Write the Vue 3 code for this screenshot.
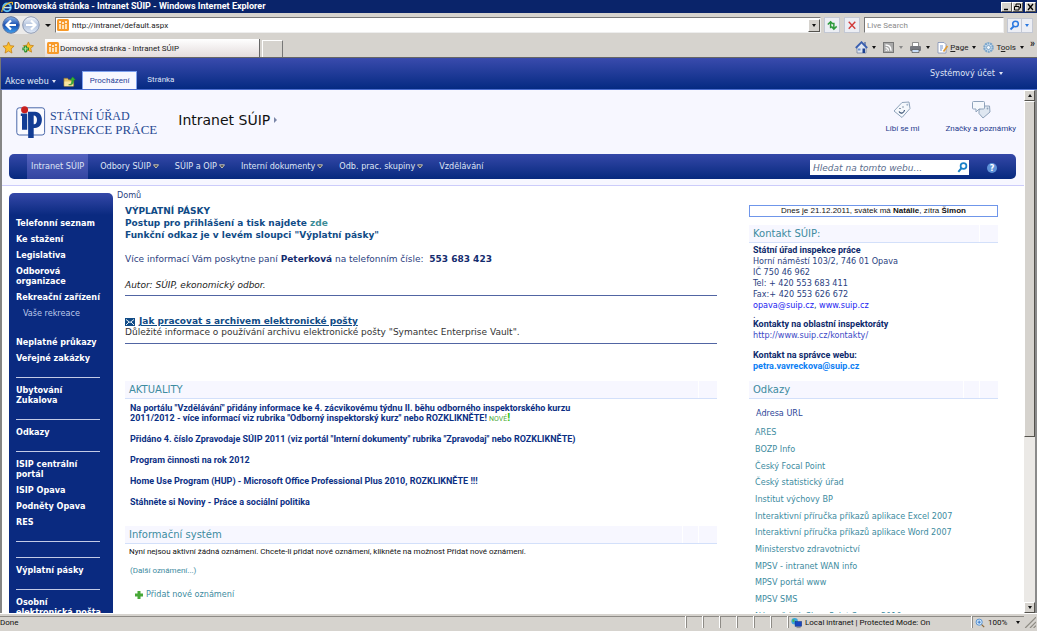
<script setup>
import { ref } from 'vue'

const address = ref('http://intranet/default.aspx')
const liveSearch = ref('')
const siteSearch = ref('')

const topNav = [
  { label: 'Intranet SÚIP', active: true },
  { label: 'Odbory SÚIP', menu: true },
  { label: 'SÚIP a OIP', menu: true },
  { label: 'Interní dokumenty', menu: true },
  { label: 'Odb. prac. skupiny', menu: true },
  { label: 'Vzdělávání' },
]

const sideNav = [
  { label: 'Telefonní seznam' },
  { label: 'Ke stažení' },
  { label: 'Legislativa' },
  { label: 'Odborová organizace' },
  { label: 'Rekreační zařízení' },
  { label: 'Vaše rekreace', kind: 'sub' },
  { label: 'Neplatné průkazy' },
  { label: 'Veřejné zakázky' },
  { kind: 'line' },
  { label: 'Ubytování Zukalova' },
  { kind: 'line' },
  { label: 'Odkazy' },
  { kind: 'line' },
  { label: 'ISIP centrální portál' },
  { label: 'ISIP Opava' },
  { label: 'Podněty Opava' },
  { label: 'RES' },
  { kind: 'line' },
  { kind: 'line' },
  { label: 'Výplatní pásky' },
  { kind: 'line' },
  { label: 'Osobní elektronická pošta' },
]

const links = [
  'ARES',
  'BOZP Info',
  'Český Focal Point',
  'Český statistický úřad',
  'Institut výchovy BP',
  'Interaktivní příručka příkazů aplikace Excel 2007',
  'Interaktivní příručka příkazů aplikace Word 2007',
  'Ministerstvo zdravotnictví',
  'MPSV - intranet WAN info',
  'MPSV portál www',
  'MPSV SMS',
  'Nápověda k SharePoint Server 2010',
]
</script>

<template>
  <div class="window">
    <header class="titlebar">
      <svg class="ie" viewBox="0 0 12 12">
        <circle cx="6" cy="6.4" r="3.8" fill="none" stroke="#5cc0f5" stroke-width="2" />
        <path d="M3 6.6h7" stroke="#bfe8ff" stroke-width="1.5" />
        <path d="M1 11C0 8 6 1 11 1.2c1 .3.400 1.800 0 2.600" fill="none" stroke="#f2c230" stroke-width="1.100" />
      </svg>
      <h1>Domovská stránka - Intranet SÚIP - Windows Internet Explorer</h1>
      <div class="winbtns">
        <button aria-label="Minimize"><svg viewBox="0 0 9 8"><path d="M2 6.500h4" stroke="#000" stroke-width="1.500" /></svg></button>
        <button aria-label="Restore"><svg viewBox="0 0 9 8"><path d="M3 3V1h4.500v4H6M1.500 3.500H6v3.500H1.500z" fill="none" stroke="#000" /></svg></button>
        <button class="close" aria-label="Close"><svg viewBox="0 0 9 8"><path d="M2 1l5 6M7 1L2 7" stroke="#000" stroke-width="1.300" /></svg></button>
      </div>
    </header>

    <div class="addressrow">
      <div class="travel">
        <button aria-label="Back">
          <svg viewBox="0 0 18 18">
            <defs><linearGradient id="bk" x2="0" y2="1"><stop offset="0" stop-color="#8ab4ea" /><stop offset=".5" stop-color="#1a4fb0" /><stop offset="1" stop-color="#3fa0ee" /></linearGradient></defs>
            <circle cx="9" cy="9" r="8.300" fill="url(#bk)" stroke="#5a6f9a" />
            <path d="M14 9H5M9 4.500L4.500 9 9 13.500" fill="none" stroke="#fff" stroke-width="2.200" />
          </svg>
        </button>
        <button aria-label="Forward">
          <svg viewBox="0 0 18 18">
            <defs><linearGradient id="fw" x2="0" y2="1"><stop offset="0" stop-color="#f4f7fc" /><stop offset=".5" stop-color="#b4c4de" /><stop offset="1" stop-color="#dfe9f7" /></linearGradient></defs>
            <circle cx="9" cy="9" r="8.300" fill="url(#fw)" stroke="#8d99b0" />
            <path d="M4 9h9M9 4.500L13.500 9 9 13.500" fill="none" stroke="#fff" stroke-width="2.200" />
          </svg>
        </button>
      </div>
      <button class="caret" aria-label="Recent pages"></button>
      <div class="address">
        <svg class="fav" viewBox="0 0 12 12"><rect width="12" height="12" rx="1.500" fill="#f79a2a" /><path d="M3 5v5M6 6v4M9 5v5" stroke="#fff3d8" stroke-width="1.600" /><circle cx="3" cy="3" r="1" fill="#fff" /><circle cx="6" cy="4" r="1" fill="#fff" /><circle cx="9" cy="3" r="1" fill="#fff" /></svg>
        <input v-model="address" aria-label="Address" />
        <button class="drop" aria-label="Show addresses"><i class="tri"></i></button>
      </div>
      <button class="tool" aria-label="Refresh"><svg viewBox="0 0 15 15"><path d="M6 11V4.500M3 7l3-3 2.500 2.500M9.500 5v6.500M7 9l2.500 3L12.500 9" fill="none" stroke="#2c9a3c" stroke-width="1.600" /></svg></button>
      <button class="tool" aria-label="Stop"><svg viewBox="0 0 15 15"><path d="M4 4l7 7.500M11 4l-7 7.500" stroke="#d23c3c" stroke-width="1.500" /></svg></button>
      <input v-model="liveSearch" class="live" placeholder="Live Search" aria-label="Live Search" />
      <div class="searchbtns">
        <button aria-label="Search"><svg viewBox="0 0 13 13"><circle cx="7.500" cy="5" r="2.800" fill="none" stroke="#2a78e0" stroke-width="1.500" /><path d="M5.500 7.500L2.500 10.500" stroke="#2a78e0" stroke-width="1.800" /></svg></button>
        <button class="more" aria-label="Search options"><i class="tri blue"></i></button>
      </div>
    </div>

    <div class="tabrow">
      <button class="plain" aria-label="Favorites"><svg viewBox="0 0 14 14"><path d="M7 1l1.800 4 4.200.500-3.200 3 .900 4.500L7 10.800 3.300 13l.900-4.500L1 5.500 5.200 5z" fill="#fbc02d" stroke="#c47c10" stroke-width=".8" /></svg></button>
      <button class="plain" aria-label="Add to favorites"><svg viewBox="0 0 14 14"><path d="M8 1l1.500 3.500 4 .500-3 3 .900 4L8 10.200 4.500 12l.900-4-3-3 4-.500z" fill="#fbc02d" stroke="#c47c10" stroke-width=".8" /><path d="M5 5v7M1.500 8.500h7" stroke="#1d8a2a" stroke-width="3" /><path d="M5 6v5M2.500 8.500h5" stroke="#b9f0a8" /></svg></button>
      <button class="tab">
        <svg class="fav" viewBox="0 0 12 12"><rect width="12" height="12" rx="1.500" fill="#f79a2a" /><path d="M3 5v5M6 6v4M9 5v5" stroke="#fff3d8" stroke-width="1.600" /><circle cx="3" cy="3" r="1" fill="#fff" /><circle cx="6" cy="4" r="1" fill="#fff" /><circle cx="9" cy="3" r="1" fill="#fff" /></svg>
        Domovská stránka - Intranet SÚIP
      </button>
      <button class="newtab" aria-label="New tab"></button>
      <div class="commands">
        <button aria-label="Home"><svg viewBox="0 0 13 13"><path d="M2 6v6h9V6L6.500 2z" fill="#dfe5f0" stroke="#6a7a9a" stroke-width=".7" /><path d="M9 1h2v4H9z" fill="#7d8db0" /><path d="M.800 7L6.500 1.200 12.200 7" fill="none" stroke="#3a5fb0" stroke-width="1.800" /><path d="M7.500 7.500h2.500v4.500H7.500z" fill="#1b3f90" /><path d="M3 7.500h2.500v2H3z" fill="#6d94d4" /></svg><i class="tri"></i></button>
        <button aria-label="Feeds"><svg viewBox="0 0 13 13"><rect x="1.500" y="1.500" width="10" height="10" fill="#a9a9a9" stroke="#777" /><path d="M3.500 4c3.300 0 5.500 2.300 5.500 5.700M3.500 6.600c1.800 0 2.900 1.200 2.900 3.100" fill="none" stroke="#fff" stroke-width="1.300" /><circle cx="4.200" cy="9.200" r=".8" fill="#fff" /></svg><i class="tri dim"></i></button>
        <button aria-label="Print"><svg viewBox="0 0 13 13"><path d="M3.500 1.500h6v4h-6z" fill="#fff" stroke="#777" stroke-width=".8" /><rect x="1" y="5" width="11" height="5" rx="1" fill="#77797f" /><path d="M3 8.500h7v3H3z" fill="#c9def8" stroke="#555" stroke-width=".7" /></svg><i class="tri"></i></button>
        <button><svg viewBox="0 0 13 13"><path d="M2 1.500h6l2 2v8.500H2z" fill="#fff" stroke="#7d8fb5" stroke-width=".8" /><path d="M4 5h3M4 7h3M4 9h2" stroke="#4d78c4" stroke-width=".8" /><path d="M11.500 5L7.500 10.500" stroke="#e09a30" stroke-width="1.700" /></svg><span><u>P</u>age</span><i class="tri"></i></button>
        <button><svg viewBox="0 0 13 13"><circle cx="6.500" cy="6.500" r="4.200" fill="#d7e8f6" stroke="#7ba6cc" stroke-width="2.200" stroke-dasharray="2 .600" /><circle cx="6.500" cy="6.500" r="2" fill="#f2f7fb" stroke="#6690b8" stroke-width=".8" /></svg><span>T<u>o</u>ols</span><i class="tri"></i></button>
        <button class="chev" aria-label="More commands">»</button>
      </div>
    </div>

    <div class="ribbon">
      <button class="actions">Akce webu <i class="tri light"></i></button>
      <button class="plain" aria-label="Navigate up"><svg viewBox="0 0 14 14"><path d="M1 3.500h4l1 1.500h5.500v7H1z" fill="#e5c469" stroke="#8d7433" stroke-width=".7" /><path d="M1.500 7H11v5H1.500z" fill="#f8e5a0" /><path d="M6 10.500c3 0 3.500-2 3.500-5H7.500L10.500 2l3 3.500h-2c0 4-1.500 6-5.500 5z" fill="#35b335" stroke="#1a7a22" stroke-width=".5" /></svg></button>
      <nav class="rtabs"><a href="#" class="on">Procházení</a><a href="#">Stránka</a></nav>
      <button class="account">Systémový účet <i class="tri light"></i></button>
    </div>

    <div class="viewport">
      <div class="page">
        <div class="masthead">
          <div class="brand">
            <svg class="logo" viewBox="0 0 30 33">
              <rect x=".8" y="1.800" width="27.800" height="27.200" rx="2.500" fill="#fbfbff" stroke="#4a68aa" />
              <path d="M4.800 7.500h6.400v16.200H6V10H4.800z" fill="#123c94" />
              <path fill-rule="evenodd" d="M12 5.800h7c9.300 0 9.300 16.200 0 16.200h-1.300v10h-5.500zM17.700 9.500v8.800c4.400.700 4.400-9.500 0-8.800z" fill="#123c94" />
              <circle cx="8.600" cy="3.800" r="3.500" fill="#c8201f" />
            </svg>
            <div class="words"><span class="w1">STÁTNÍ ÚŘAD</span><span class="w2">INSPEKCE PRÁCE</span></div>
            <h2>Intranet SÚIP <i class="rt"></i></h2>
            <div class="social">
              <button>
                <svg viewBox="0 0 20 20"><path d="M2 11L10 2.500l7-.500 1 6.500L10 17.500z" fill="#f5f8fc" stroke="#8fa3bb" /><circle cx="15.300" cy="4.800" r="1" fill="#a5b6cc" /><path d="M7 11.500c2 3 5 1.500 5.500-1.500M8 8v1M11 6.500v1" fill="none" stroke="#324a6e" stroke-width="1.100" /></svg>
                Líbí se mi
              </button>
              <button>
                <svg viewBox="0 0 20 20"><path d="M8 13.500V10l5-4h5.500l.500 6-7 6z" fill="#dfe7f1" stroke="#8fa3bb" /><circle cx="16.500" cy="8.500" r=".9" fill="#8fa3bb" /><path d="M2.500 1.500h10q1 0 1 1V8q0 1-1 1H8l-3 3V9H2.500q-1 0-1-1V2.500q0-1 1-1z" fill="#f5f8fc" stroke="#8fa3bb" /></svg>
                Značky a poznámky
              </button>
            </div>
          </div>
          <nav class="topnav">
            <a v-for="item in topNav" :key="item.label" href="#" :class="{ on: item.active }">{{ item.label }}<svg v-if="item.menu" viewBox="0 0 6 5"><path d="M.500.800h5L3 4z" fill="#3a3a3a" stroke="#d8d4c4" stroke-width=".9" /></svg></a>
            <form class="sitesearch" @submit.prevent>
              <input v-model="siteSearch" placeholder="Hledat na tomto webu..." aria-label="Hledat na tomto webu" />
              <button aria-label="Hledat"><svg viewBox="0 0 13 13"><circle cx="7.500" cy="5" r="2.900" fill="none" stroke="#1b82c8" stroke-width="1.700" /><path d="M5.300 7.300L2.300 10.800" stroke="#1b82c8" stroke-width="2" /></svg></button>
            </form>
            <button class="help" aria-label="Nápověda">?</button>
          </nav>
        </div>

        <div class="body">
          <nav class="side">
            <template v-for="(item, i) in sideNav" :key="i">
              <hr v-if="item.kind === 'line'" />
              <a v-else href="#" :class="item.kind">{{ item.label }}</a>
            </template>
          </nav>

          <main>
            <a class="crumb" href="#">Domů</a>
            <section class="article">
              <p class="lead">VÝPLATNÍ PÁSKY<br />Postup pro přihlášení a tisk najdete <a href="#">zde</a><br />Funkční odkaz je v levém sloupci "Výplatní pásky"</p>
              <p class="info">Více informací Vám poskytne paní <b>Peterková</b> na telefonním čísle:&nbsp; <b>553 683 423</b></p>
              <p class="author">Autor: SÚIP, ekonomický odbor.</p>
            </section>
            <section class="article archive">
              <p class="link"><svg viewBox="0 0 10 8"><rect width="10" height="8" fill="#104b86" /><path d="M1 1.500l4 3 4-3M1 7l3-3M9 7L6 4" fill="none" stroke="#fff" stroke-width=".9" /></svg><a href="#">Jak pracovat s archivem elektronické pošty</a></p>
              <p>Důležité informace o používání archivu elektronické pošty "Symantec Enterprise Vault".</p>
            </section>

            <h3>AKTUALITY</h3>
            <div class="news">
              <p><a href="#">Na portálu "Vzdělávání" přidány informace ke 4. zácvikovému týdnu II. běhu odborného inspektorského kurzu<br />2011/2012 - více informací viz rubrika "Odborný inspektorský kurz" nebo ROZKLIKNĚTE!</a> <span class="new">NOVÉ<b>!</b></span></p>
              <p><a href="#">Přidáno 4. číslo Zpravodaje SÚIP 2011 (viz portál "Interní dokumenty" rubrika "Zpravodaj" nebo ROZKLIKNĚTE)</a></p>
              <p><a href="#">Program činnosti na rok 2012</a></p>
              <p><a href="#">Home Use Program (HUP) - Microsoft Office Professional Plus 2010, ROZKLIKNĚTE !!!</a></p>
              <p><a href="#">Stáhněte si Noviny - Práce a sociální politika</a></p>
            </div>

            <h3 class="two">Informační systém</h3>
            <p class="none">Nyní nejsou aktivní žádná oznámení. Chcete-li přidat nové oznámení, klikněte na možnost Přidat nové oznámení.</p>
            <a class="next" href="#">(Další oznámení...)</a>
            <a class="add" href="#"><svg viewBox="0 0 8 8"><path d="M2.500 0h3v2.500H8v3H5.500V8h-3V5.500H0v-3h2.500z" fill="#48a838" /></svg>Přidat nové oznámení</a>
          </main>

          <aside>
            <p class="today">Dnes je 21.12.2011, svátek má <b>Natálie</b>, zítra <b>Šimon</b></p>
            <h3>Kontakt SÚIP:</h3>
            <address>
              <b>Státní úřad inspekce práce</b><br />Horní náměstí 103/2, 746 01 Opava<br />IČ 750 46 962<br />Tel: + 420 553 683 411<br />Fax:+ 420 553 626 672<br /><a href="#">opava@suip.cz</a>, <a href="#">www.suip.cz</a>
              <p class="dot">.</p>
              <b>Kontakty na oblastní inspektoráty</b><br /><a class="soft" href="#">http://www.suip.cz/kontakty/</a>
              <p class="admin"><b>Kontakt na správce webu:</b><br /><a href="#"><b>petra.vavreckova@suip.cz</b></a></p>
            </address>
            <h3 class="two">Odkazy</h3>
            <a class="urlhead" href="#">Adresa URL</a>
            <ul>
              <li v-for="l in links" :key="l"><a href="#">{{ l }}</a></li>
            </ul>
          </aside>
        </div>
      </div>
      <div class="scroll">
        <button aria-label="Scroll up"><i class="tri up"></i></button>
        <div class="thumb"></div>
        <div class="track"></div>
        <button aria-label="Scroll down"><i class="tri"></i></button>
      </div>
    </div>

    <footer class="status">
      <span class="grow">Done</span>
      <span class="cell"></span><span class="cell"></span><span class="cell"></span><span class="cell"></span><span class="cell"></span><span class="cell"></span>
      <span class="zone"><svg viewBox="0 0 13 13"><circle cx="4.500" cy="4.500" r="3.500" fill="#3aa6e0" /><path d="M2 3c2-2 3 1 2 2s-2 1-2-2z" fill="#4cba4c" /><rect x="5" y="5" width="7" height="5" fill="#1846c0" stroke="#10307c" stroke-width=".6" /><path d="M6.500 11.500h4.500" stroke="#888" /></svg>Local intranet | Protected Mode: On</span>
      <button class="zoom"><svg viewBox="0 0 12 12"><circle cx="5" cy="5" r="3.700" fill="#d8ecfb" stroke="#3e82cc" /><path d="M3 5h4M5 3v4" stroke="#2468c0" /><path d="M8 8l3 3" stroke="#8a6a3c" stroke-width="1.500" /></svg>100% <i class="tri"></i></button>
      <svg class="grip" viewBox="0 0 10 10"><path d="M1 10L10 1M5 10l5-5M8 10l2-2" stroke="#8f8c84" /></svg>
    </footer>
  </div>
</template>

<style>
body { margin: 0; overflow: hidden; }
</style>

<style scoped>
.window {
  --ui: Roboto, "Liberation Sans", sans-serif;
  --wide: "DejaVu Sans", sans-serif;
  display: flex; flex-direction: column; height: 100vh; overflow: hidden;
  background: #d6d3ce; color: #222;
  font-family: "DejaVu Sans Condensed", "DejaVu Sans", sans-serif; font-size: 9px; line-height: 11px;
}
.window * { box-sizing: border-box; }
button, input { font: inherit; color: inherit; margin: 0; padding: 0; border: 0; background: none; min-width: 0; }
button { white-space: nowrap; flex: none; }
a { color: inherit; text-decoration: none; }
p, h1, h2, h3, ul { margin: 0; padding: 0; font-size: inherit; font-weight: inherit; list-style: none; }
svg { flex: none; display: block; }
.tri { display: inline-block; border: 2px solid transparent; border-top: 3px solid #111; border-bottom: 0; flex: none; }
.tri.light { border-top-color: #dfe4f5; }
.tri.dim { border-top-color: #888; }
.tri.blue { border-top-color: #2a78e0; }
.tri.up { border-top: 0; border-bottom: 3px solid #111; }
.plain svg { width: 13px; height: 13px; }
.fav { width: 12px; height: 12px; }
.titlebar, .actions { font-family: var(--ui); }
.addressrow, .tabrow, .rtabs, .social, .status, .none, .next { font-family: var(--ui); font-size: 8px; }

.titlebar { display: flex; align-items: center; flex: none; height: 13px; background: #0a246a; color: #fff; padding: 0 1px; }
.ie { width: 12px; height: 12px; margin-right: 1px; }
.titlebar h1 { flex: 1; font-weight: bold; }
.winbtns { display: flex; }
.winbtns button, .drop, .scroll button { background: #d6d3ce; border: 1px solid; border-color: #fff #55534e #55534e #fff; }
.winbtns button { width: 11px; height: 10px; }
.winbtns svg { width: 9px; height: 8px; }
.winbtns .close { margin-left: 2px; }

.addressrow { display: flex; align-items: center; flex: none; height: 24px; padding: 0 4px 0 2px; }
.travel { display: flex; gap: 2px; background: #ecebea; border-radius: 9px; }
.travel svg { width: 18px; height: 18px; }
.caret { width: 15px; height: 14px; }
.caret::before { content: ""; display: block; margin: 0 auto; width: 0; border: 3px solid transparent; border-top-color: #111; border-bottom: 0; }
.address { display: flex; align-items: center; flex: 1; height: 16px; padding-left: 1px; background: #fff; border: 1px solid #777; border-right-color: #eee; border-bottom-color: #eee; }
.address input { flex: 1; padding-left: 3px; height: 13px; }
.drop { width: 12px; height: 13px; display: grid; place-items: center; }
.tool { width: 16px; height: 16px; margin-left: 4px; background: #eceef4; border: 1px solid #c3c8d4; }
.address + .tool { margin-left: 3px; }
.tool svg { width: 14px; height: 14px; }
.live { width: 140px; height: 16px; margin-left: 4px; padding-left: 2px; background: #fff; border: 1px solid #777; border-right-color: #eee; border-bottom-color: #eee; }
.live::placeholder { color: #8a8a8a; opacity: 1; }
.searchbtns { display: flex; height: 15px; margin-left: 3px; background: #eceef4; border: 1px solid #c3c8d4; }
.searchbtns svg { width: 13px; height: 13px; }
.more { width: 11px; border-left: 1px solid #c3c8d4; display: grid; place-items: center; }

.tabrow { display: flex; align-items: flex-end; flex: none; height: 20px; padding: 0 2px; }
.tabrow > .plain { align-self: center; width: 19px; height: 18px; }
.tab { display: flex; align-items: center; gap: 1px; width: 215px; height: 18px; margin-left: 5px; padding: 2px; background: linear-gradient(#fff, #e4dcdc); border-right: 1px solid #666; text-align: left; }
.newtab { width: 21px; height: 17px; margin-left: 2px; border: 1px solid #fff; border-right: 1px solid #777; border-bottom: 0; }
.commands { display: flex; align-items: center; align-self: center; margin-left: auto; gap: 6px; }
.commands button { display: flex; align-items: center; gap: 4px; }
.commands svg { width: 13px; height: 13px; }
.commands span { margin-left: -3px; }
.commands .chev { align-self: flex-start; font-size: 10px; font-weight: bold; line-height: 6px; }

.ribbon { display: flex; align-items: flex-end; flex: none; height: 33px; padding-left: 4px; color: #dfe4f5; background: linear-gradient(#3a4bad, #052a82); border-top: 1px solid #666; border-bottom: 1px solid #4d6fd0; border-left: 1px solid #777; }
.actions { display: flex; align-items: center; gap: 3px; height: 16px; }
.ribbon .plain { height: 15px; margin-left: 7px; }
.rtabs { display: flex; margin-left: 6px; }
.rtabs a { padding: 0 7px; line-height: 17px; }
.rtabs a.on { background: #f7f7ff; color: #2a4296; border: 1px solid #7ea0ee; border-bottom: 0; margin-right: 3px; }
.account { display: flex; align-items: center; gap: 4px; align-self: center; margin: 0 34px 0 auto; }

.viewport { flex: 1; min-height: 0; display: flex; border-left: 2px solid #858585; background: #fff; }
.page { flex: 1; min-width: 0; overflow: hidden; color: #2b4180; }
.masthead { background: #f7f7ff; border-bottom: 1px solid #ccccfa; padding: 0 8px 6px 7px; }
.brand { display: flex; height: 64px; padding-left: 7px; }
.logo { width: 30px; height: 33px; margin-top: 16px; }
.words { display: flex; flex-direction: column; margin: 20px 21px 0 4px; font-family: "Liberation Serif", serif; color: #274a94; white-space: nowrap; }
.w1 { font-size: 12px; line-height: 13px; }
.w2 { font-size: 13px; line-height: 13px; }
.brand h2 { flex: 1; display: flex; align-items: center; gap: 4px; height: 60px; font-family: var(--wide); font-size: 14px; color: #111; }
.rt { border: 3px solid transparent; border-left-color: #7a86a8; border-right: 0; }
.social { display: flex; align-items: flex-start; gap: 26px; padding-top: 10px; color: #1f3b8e; }
.social svg { width: 20px; height: 20px; margin: 0 auto 3px; }
.topnav { display: flex; align-items: center; height: 25px; padding: 0 19px 0 18px; color: #dfe4f5; background: linear-gradient(#3548a8, #06297e); border-radius: 5px; }
.topnav > a { display: flex; align-items: center; height: 25px; margin-right: 8px; padding: 0 4px; white-space: nowrap; gap: 2px; }
.topnav > a.on { background: linear-gradient(#5563c0, #3345a0); }
.topnav > a svg { width: 6px; height: 5px; }
.sitesearch { display: flex; align-items: center; width: 159px; height: 15px; margin: 2px 18px 0 auto; background: #fff; }
.sitesearch input { flex: 1; padding-left: 3px; height: 15px; font-family: var(--wide); font-style: italic; color: #44587f; }
.sitesearch input::placeholder { color: #5a6c8c; opacity: 1; }
.sitesearch svg { width: 13px; height: 13px; }
.help { width: 10px; height: 10px; margin-top: 2px; border-radius: 50%; background: #5e92d8; color: #fff; font-weight: bold; line-height: 10px; }

.body { display: flex; align-items: flex-start; padding: 0 26px 0 7px; }
.side { flex: none; width: 104px; margin-top: 7px; padding: 22px 9px 20px 7px; color: #fff; font-weight: bold; line-height: 10px; background: linear-gradient(#3548a8, #0a2a80 22px); border-radius: 5px 5px 0 0; }
.side a { display: block; padding: 3px 0; }
.side .sub { padding-left: 7px; margin-bottom: 13px; font-weight: normal; color: #bcc8ea; }
.side hr { width: 84px; height: 16px; margin: 0; border: 0; background: linear-gradient(#c3cbe6, #c3cbe6) 0 11px / 100% 1px no-repeat; }

main { flex: 1; min-width: 0; padding: 4px 32px 0 4px; }
main p, aside p { white-space: nowrap; }
.crumb { display: block; line-height: 11px; }
main > section, main > h3, .news, .none, .next, .add { margin-left: 8px; }
.article { font-family: var(--wide); border-bottom: 1px solid #5165a3; }
.lead { margin-top: 4px; line-height: 12px; font-weight: bold; color: #104b86; }
.lead a { color: #3c8c98; }
.info { margin-top: 12px; line-height: 13px; }
.info b { color: #142c6e; }
.author { margin-top: 13px; padding-bottom: 3px; line-height: 13px; font-style: italic; color: #222; }
.archive { margin-top: 20px; padding-bottom: 5px; color: #333; }
.link { display: flex; align-items: center; gap: 4px; color: #104b86; font-weight: bold; }
.link a { text-decoration: underline; }
.link svg { width: 10px; height: 8px; }
h3 { height: 18px; padding-left: 4px; line-height: 17px; font-family: var(--wide); font-size: 10px; color: #3d8ba0; background: linear-gradient(90deg, #f7f7ff calc(100% - 19px), #fff 0, #fff calc(100% - 18px), #f7f7ff 0); border-bottom: 1px solid #d3e0fa; }
h3.two { background: linear-gradient(90deg, #f7f7ff calc(100% - 35px), #fff 0, #fff calc(100% - 34px), #f7f7ff 0, #f7f7ff calc(100% - 19px), #fff 0, #fff calc(100% - 18px), #f7f7ff 0); }
main > h3 { margin-top: 37px; }
.news { padding: 4px 5px 0; font-family: var(--ui); font-weight: bold; line-height: 10px; color: #0b2f84; }
.news p { margin-bottom: 11px; }
.new { color: #4fa83a; font-weight: normal; font-size: 7px; line-height: 0; }
.new b { color: #33c311; font-size: 11px; }
main > h3.two { margin-top: 19px; }
.none { margin-top: 2px; padding-left: 4px; color: #111; }
.next { display: block; margin-top: 8px; padding-left: 5px; color: #3d8ba0; }
.add { display: flex; align-items: center; gap: 3px; margin-top: 13px; padding-left: 10px; color: #3d8ba0; }
.add svg { width: 8px; height: 8px; }

aside { flex: none; width: 249px; padding-top: 19px; }
.today { height: 12px; line-height: 10px; border: 1px solid #6f96ea; text-align: center; font-family: "Liberation Sans", sans-serif; font-size: 8px; color: #111; }
aside h3 { margin-top: 8px; }
address { margin-top: 2px; padding: 0 0 1px 4px; font-style: normal; line-height: 11px; white-space: nowrap; }
address b { font-family: var(--ui); color: #0e2a6c; }
address a, address a b { color: #1c1cf0; }
address a.soft { color: #3b49c6; }
.admin a b { color: #0c80f4; }
.dot { line-height: 8px; }
.admin { margin-top: 9px; }
.urlhead { display: block; margin: 8px 0 5px 7px; line-height: 12px; color: #2d4698; }
aside ul { padding-left: 6px; color: #3d8ba0; }
aside li { line-height: 17px; white-space: nowrap; }
aside li:nth-child(3n) { line-height: 16px; }

.scroll { flex: none; width: 13px; display: flex; flex-direction: column; background: #ebe9e6; border-right: 2px solid #8a8a8a; }
.scroll button { width: 11px; height: 11px; display: grid; place-items: center; }
.thumb { flex: 336; background: #d6d3ce; border: 1px solid; border-color: #fff #55534e #55534e #fff; }
.track { flex: 166; }

.status { display: flex; align-items: stretch; flex: none; height: 18px; padding: 2px 1px 3px 0; border-top: 1px solid #fff; color: #111; line-height: 12px; white-space: nowrap; }
.status > * { border-top: 1px solid #8e8b86; }
.grow { flex: 1; }
.cell { width: 17px; border-left: 1px solid #8e8b86; box-shadow: -1px 0 #fff; }
.zone { display: flex; align-items: center; gap: 2px; width: 184px; padding-left: 1px; border-left: 1px solid #8e8b86; box-shadow: -1px 0 #fff; }
.zone svg { width: 13px; height: 12px; }
.zoom { display: flex; align-items: center; gap: 3px; width: 52px; padding: 0 4px 0 2px; border-left: 1px solid #8e8b86; box-shadow: -1px 0 #fff; }
.zoom svg { width: 10px; height: 10px; }
.zoom .tri { margin-left: auto; }
.status .grip { width: 12px; height: 12px; border: 0; align-self: flex-end; }
</style>
